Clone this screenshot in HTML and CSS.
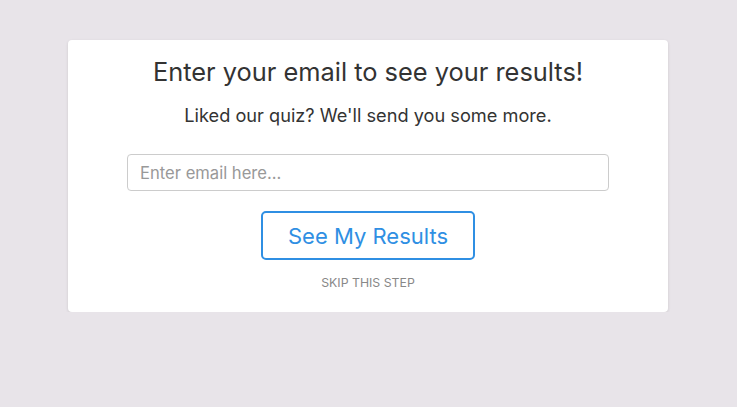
FILE: index.html
```html
<!DOCTYPE html>
<html>
<head>
<meta charset="utf-8">
<link rel="stylesheet" href="styles.css">
</head>
<body>
<main class="page">
  <section class="card">
    <h1 class="title">Enter your email to see your results!</h1>
    <p class="subtitle">Liked our quiz? We'll send you some more.</p>
    <input class="email" type="text" placeholder="Enter email here...">
    <button class="btn">See My Results</button>
    <a class="skip" href="#">SKIP THIS STEP</a>
  </section>
</main>
</body>
</html>
```
FILE: styles.css
```css
html, body {
  margin: 0;
  padding: 0;
  background: #e8e4e9;
  font-family: Inter, Lato, sans-serif;
}
.page {
  display: flex;
  justify-content: flex-start;
  padding: 40px 0 0 68px;
}
.card {
  width: 600px;
  box-sizing: border-box;
  background: #fff;
  border-radius: 4px;
  box-shadow: 0 1px 3px rgba(0,0,0,0.12);
  display: flex;
  flex-direction: column;
  align-items: center;
  padding: 14px 0 21px;
}
.title {
  margin: 0;
  font-size: 25.4px;
  font-weight: 400;
  color: #333;
  line-height: 36px;
}
.subtitle {
  margin: 13px 0 0;
  font-size: 18.2px;
  color: #333;
  line-height: 24px;
}
.email {
  margin-top: 27px;
  width: 482px;
  height: 37px;
  box-sizing: border-box;
  border: 1px solid #ccc;
  border-radius: 4px;
  padding: 0 12px;
  font-family: inherit;
  font-size: 16.6px;
  color: #333;
  outline: none;
}
.email::placeholder { color: #999; }
.btn {
  margin-top: 20px;
  width: 214px;
  height: 49px;
  box-sizing: border-box;
  background: #fff;
  border: 2px solid #2f8fe3;
  border-radius: 5px;
  color: #2f8fe3;
  font-family: inherit;
  font-size: 22px;
  cursor: pointer;
}
.skip {
  margin-top: 15px;
  font-size: 12.3px;
  color: #888;
  text-decoration: none;
  line-height: 16px;
}
```
